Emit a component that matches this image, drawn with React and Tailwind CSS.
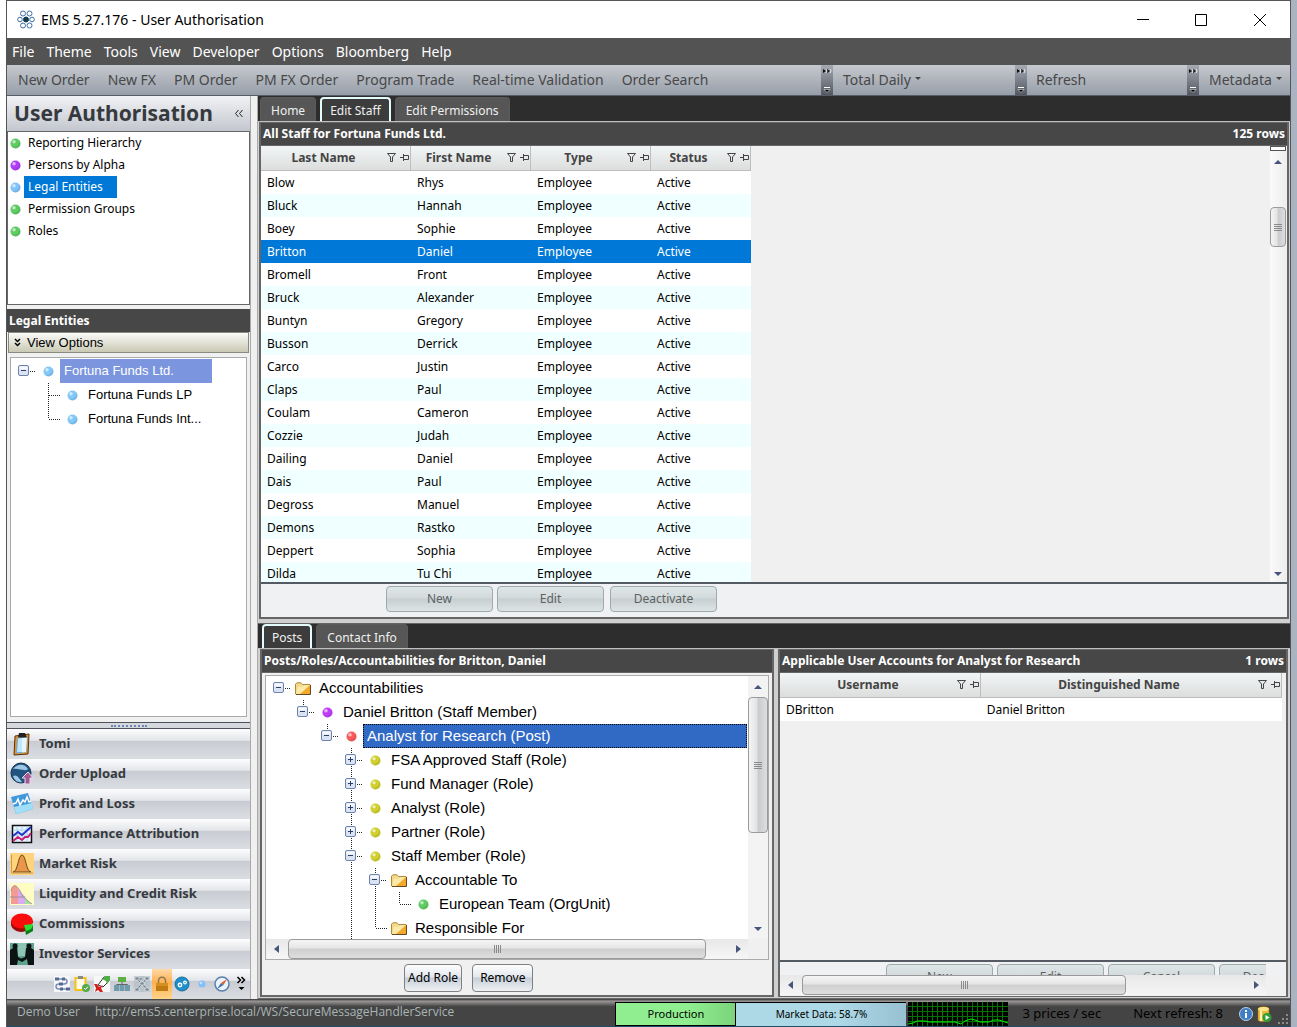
import { useState } from "react";

const uiFont = "font-['Noto_Sans','Open_Sans',sans-serif]";
const treeFont = "font-['Liberation_Sans',Arial,sans-serif]";

const menuItems = ["File", "Theme", "Tools", "View", "Developer", "Options", "Bloomberg", "Help"];
const orderItems = ["New Order", "New FX", "PM Order", "PM FX Order", "Program Trade", "Real-time Validation", "Order Search"];

const views = [
  { name: "Reporting Hierarchy", color: "#5ecb63" },
  { name: "Persons by Alpha", color: "#b03cf5" },
  { name: "Legal Entities", color: "#82c3fb" },
  { name: "Permission Groups", color: "#5ecb63" },
  { name: "Roles", color: "#5ecb63" },
];

const entityTree = [
  { label: "Fortuna Funds Ltd.", cells: ["minus"], icon: "#82c8fb", selected: true },
  { label: "Fortuna Funds LP", cells: ["", "tee"], icon: "#82c8fb" },
  { label: "Fortuna Funds Int...", cells: ["", "elbow"], icon: "#82c8fb" },
];

const postTree = [
  { label: "Accountabilities", cells: ["minus"], icon: "folder" },
  { label: "Daniel Britton (Staff Member)", cells: ["", "minus-top"], icon: "#c13cf8" },
  { label: "Analyst for Research (Post)", cells: ["", "", "minus-top"], icon: "#f95c5c", selected: true },
  { label: "FSA Approved Staff (Role)", cells: ["", "", "", "plus"], icon: "#cfcf2e" },
  { label: "Fund Manager (Role)", cells: ["", "", "", "plus"], icon: "#cfcf2e" },
  { label: "Analyst (Role)", cells: ["", "", "", "plus"], icon: "#cfcf2e" },
  { label: "Partner (Role)", cells: ["", "", "", "plus"], icon: "#cfcf2e" },
  { label: "Staff Member (Role)", cells: ["", "", "", "minus-through"], icon: "#cfcf2e" },
  { label: "Accountable To", cells: ["", "", "", "line", "minus-through"], icon: "folder" },
  { label: "European Team (OrgUnit)", cells: ["", "", "", "line", "line", "elbow"], icon: "#5ecb63" },
  { label: "Responsible For", cells: ["", "", "", "line", "elbow"], icon: "folder" },
];

const staff = [
  ["Blow", "Rhys"],
  ["Bluck", "Hannah"],
  ["Boey", "Sophie"],
  ["Britton", "Daniel"],
  ["Bromell", "Front"],
  ["Bruck", "Alexander"],
  ["Buntyn", "Gregory"],
  ["Busson", "Derrick"],
  ["Carco", "Justin"],
  ["Claps", "Paul"],
  ["Coulam", "Cameron"],
  ["Cozzie", "Judah"],
  ["Dailing", "Daniel"],
  ["Dais", "Paul"],
  ["Degross", "Manuel"],
  ["Demons", "Rastko"],
  ["Deppert", "Sophia"],
  ["Dilda", "Tu Chi"],
];

const Ball = ({ color, size = 11 }) => (
  <svg width={size} height={size} viewBox="0 0 11 11" className="shrink-0">
    <circle cx="5.5" cy="5.5" r="5" fill={color} />
    <path d="M1.5 8.5a5 5 0 0 0 8.6-1A5 5 0 0 0 9 2a5.6 5.6 0 0 1-7.500 6.500z" fill="#000" opacity=".08" />
    <circle cx="4" cy="3.800" r="1.800" fill="#fff" opacity=".6" />
  </svg>
);

const FolderIcon = () => (
  <svg width="16" height="13" viewBox="0 0 16 13">
    <path d="M.5 12V2L2 .8h4L7.500 2.500H15V12z" fill="#f3d988" stroke="#b08a3c" />
    <path d="M1 12l2-7.500h5L9.500 3H15v9z" fill="#fbe9a8" />
    <path d="M5 12l10-9v9z" fill="#f3a92c" />
    <path d="M1 12.500h14.500V3" fill="none" stroke="#5e4b22" />
  </svg>
);

const TreeCell = ({ kind }) => {
  const dots = { stroke: "#222", strokeDasharray: "1 1" };
  const box = kind.startsWith("minus") || kind === "plus";
  return (
    <svg width="24" height="24" viewBox="0 0 24 24" className="shrink-0">
      {(kind === "line" || kind === "tee" || kind === "plus" || kind === "minus-through") && <path d="M12.500 0V24" {...dots} />}
      {(kind === "elbow" || kind === "minus-top") && <path d="M12.500 0V12" {...dots} />}
      {(kind === "elbow" || kind === "tee") && <path d="M13 12.500H24" {...dots} />}
      {box && (
        <>
          <path d="M18 12.500H24" {...dots} />
          <rect x="6.500" y="6.500" width="10" height="10" rx="1.500" fill="#dbe3f2" stroke="#6c84ab" />
          <path d="M7.500 7.500h8v3h-8z" fill="#fff" opacity=".75" />
          <path d="M9 11.500h5" stroke="#2d3f63" />
          {kind === "plus" && <path d="M11.500 9v5" stroke="#2d3f63" />}
        </>
      )}
    </svg>
  );
};

const Tree = ({ rows, size, selectedClass }) => (
  <ul className={treeFont}>
    {rows.map((row) => (
      <li key={row.label} className="flex h-6">
        {row.cells.map((kind, i) => (
          <TreeCell key={i} kind={kind} />
        ))}
        <span className="flex w-6 shrink-0 items-center justify-center">
          {row.icon === "folder" ? <FolderIcon /> : <Ball color={row.icon} />}
        </span>
        <button type="button" className={`truncate px-1 text-left ${size} ${row.selected ? selectedClass : ""}`}>
          {row.label}
        </button>
      </li>
    ))}
  </ul>
);

const Arrow = ({ dir }) => {
  const shapes = {
    up: "M0 7h8L4 3z",
    down: "M0 2h8L4 6z",
    left: "M6 0v8L1 4z",
    right: "M2 0v8l5-4z",
  };
  return (
    <svg width="8" height="8" viewBox="0 0 8 8" className="shrink-0">
      <path d={shapes[dir]} fill="#46557a" />
    </svg>
  );
};

const HScroll = ({ thumb }) => (
  <div className="flex h-5 items-center bg-gradient-to-b from-[#e8e8e8] to-[#f6f6f6]">
    <span className="flex w-[22px] justify-center"><Arrow dir="left" /></span>
    <div className="flex h-full min-w-0 flex-1">
      <div className={`flex items-center justify-center gap-px rounded-sm border border-[#9a9a9a] bg-linear-[to_bottom,#f5f5f5,#e6e6e6_45%,#cfcfcf_50%,#dedede] ${thumb}`}>
        {[0, 1, 2, 3].map((n) => <i key={n} className="h-2 w-px bg-[#8a8a8a]" />)}
      </div>
    </div>
    <span className="flex w-5 justify-center"><Arrow dir="right" /></span>
  </div>
);

const VThumb = ({ size }) => (
  <div className={`flex flex-col items-center justify-center gap-px rounded-sm border border-[#9a9a9a] bg-linear-[to_right,#f5f5f5,#e2e2e4_45%,#c8cacd_50%,#dcdee0] ${size}`}>
    {[0, 1, 2, 3].map((n) => <i key={n} className="h-px w-2 bg-[#8a8a8a]" />)}
  </div>
);

const Tab = ({ label, active, onClick }) => (
  <button
    type="button"
    onClick={onClick}
    className={`h-full rounded-t-sm pt-0.5 text-[12px] text-[#f0f0f0] ${active ? "border-2 border-b-0 border-[#e4fbfb] bg-[#3c3c3c] px-2" : "border border-b-0 border-[#5a5a5a] bg-[#565656] px-2.5"}`}
  >
    {label}
  </button>
);

const PanelTitle = ({ title, rows }) => (
  <div className="flex h-6 shrink-0 items-center justify-between border-y border-[#666] bg-[#474747] px-0.5 text-[12px] font-bold text-white">
    <h2>{title}</h2>
    {rows && <span>{rows}</span>}
  </div>
);

const HeaderCell = ({ label }) => (
  <th className="h-[25px] border-r border-b border-[#bdbdbd] bg-linear-[to_bottom,#f2f5f6,#dcdedd] p-0 text-[12px] font-bold text-[#444]">
    <div className="flex items-center">
      <span className="flex-1">{label}</span>
      <svg width="24" height="12" viewBox="0 0 24 12" fill="none" stroke="#444" className="shrink-0">
        <path d="M1.500 1.500h8L6.500 5v4.500h-2V5z" />
        <path d="M14 5.500h3M17.500 2v7M17.500 3.500h5v4h-5" />
      </svg>
    </div>
  </th>
);

const GreyButton = ({ children }) => (
  <button type="button" className="h-[26px] w-[107px] shrink-0 rounded-sm border border-[#9eabab] bg-linear-[to_bottom,#dfe6e7,#d3dadb_45%,#c6cfd0_50%,#dde4e5] text-[12px] text-[#5c6262]">
    {children}
  </button>
);

const Grip = () => (
  <span className="flex h-full w-3 shrink-0 items-center bg-linear-[to_bottom,#a5aab3,#525963]">
    <svg width="12" height="31" viewBox="0 0 12 31">
      <path d="M2 4l3 2-3 2zM6 4l3 2-3 2z" fill="#111" />
      <path d="M5 4l1 2-1 2M9 4l1 2-1 2" stroke="#eee" fill="none" />
      <path d="M3 22.500h6" stroke="#fff" />
      <path d="M3 24.500h6l-3 3z" fill="#000" stroke="#fff" strokeWidth=".5" />
    </svg>
  </span>
);

const navItems = [
  {
    name: "Tomi",
    art: (
      <>
        <path d="M5 4l14-2-1 20-14 1z" fill="#e2932f" stroke="#5d3208" />
        <path d="M7.500 6l9.500-1-1 15-9.500 1z" fill="#bfe6fb" stroke="#6ba7cf" />
        <path d="M12 6l5-1-1 15-4 .5z" fill="#e6f6ff" />
        <path d="M9 1h6l2 4.500H8z" fill="#222" />
      </>
    ),
  },
  {
    name: "Order Upload",
    art: (
      <>
        <circle cx="11" cy="11" r="10" fill="#20537f" stroke="#153450" />
        <path d="M3 7c5-6 12-5 15 0-3 3-9-1-15 0zM3 14c4-2 6 2 9 6-4 1-8-2-9-6z" fill="#9ec7e6" />
        <path d="M18 10l5 6h-3v6h-5v-6h-3z" fill="#a05a94" stroke="#f3d7ec" />
      </>
    ),
  },
  {
    name: "Profit and Loss",
    art: (
      <>
        <path d="M1 5l17-4 5 16-17 5z" fill="#3f97dc" />
        <path d="M4 15l18-4 1 6-17 5z" fill="#9fe0f8" />
        <path d="M3 12l3-1 2-4 2 6 3-5 2 2 2-5 2 5 2-1" stroke="#fff" fill="none" strokeWidth="1.500" />
      </>
    ),
  },
  {
    name: "Performance Attribution",
    art: (
      <>
        <path d="M2.500 3.500h19v17h-19z" fill="#eef5ff" stroke="#111" strokeWidth="1.500" />
        <path d="M7 4v16M12 4v16M17 4v16M3 8h18M3 13h18" stroke="#a8d4f0" />
        <path d="M3 14l5-4 4 3 9-8" stroke="#2433c8" fill="none" strokeWidth="2" />
        <path d="M3 19l5-4 4 3 3-3h3l3-4" stroke="#c81e78" fill="none" strokeWidth="2" />
      </>
    ),
  },
  {
    name: "Market Risk",
    art: (
      <>
        <path d="M0 1h24v22H0z" fill="#ffd27c" />
        <path d="M3 20c5 0 5-17 9-17s4 17 9 17z" fill="#e8964a" stroke="#6d4a1c" />
        <path d="M1.500 3v18H23" stroke="#c79c50" fill="none" />
      </>
    ),
  },
  {
    name: "Liquidity and Credit Risk",
    art: (
      <>
        <path d="M0 1h24v22H0z" fill="#fffcc4" />
        <path d="M1 22V7c3-6 6-3 7 0v15z" fill="#f39a94" />
        <path d="M8 22V7l7 8v7z" fill="#dba8f2" />
        <path d="M15 22v-7l6 7z" fill="#9be89b" />
        <path d="M1 9c2-8 6-6 9 0s6 9 12 13M0 15h15" stroke="#a09098" fill="none" />
      </>
    ),
  },
  {
    name: "Commissions",
    art: (
      <>
        <path d="M1 9v4c2 7 11 8 14 6v-6l8-2V9z" fill="#a00808" />
        <ellipse cx="12" cy="9" rx="11" ry="7.500" fill="#fb0d0d" />
        <path d="M14 13l9 0v6l-7 4z" fill="#0b7d12" />
        <path d="M14 13l9-1c0 4-3 6-7 7z" fill="#2be034" />
      </>
    ),
  },
  {
    name: "Investor Services",
    art: (
      <>
        <path d="M0 1h24v22H0z" fill="#5fa28e" />
        <path d="M8 1h8v13H8z" fill="#8dc4b3" />
        <circle cx="5" cy="4" r="2.500" fill="#0b1413" />
        <circle cx="19" cy="4" r="2.500" fill="#0b1413" />
        <path d="M0 23V8l3-2h4l1 9 3 1.500L15 15l1-9h5l3 2v15h-6l-1-6-5 3-4-2-1 5z" fill="#0b1413" />
      </>
    ),
  },
];

const shortcuts = [
  {
    name: "Workflow",
    art: <><path d="M0 0h16v16H0z" fill="#f5f7fb" /><path d="M1 3h9c4 0 4 5 0 5H5c-4 0-4 5 0 5h9" stroke="#7b8db5" fill="none" strokeWidth="1.500" /><path d="M1 1.500h4v3H1zM8 1.500h3v3H8zM5 6.500h4v3H5zM6 11.500h3v3H6zM12 11.500h4v3h-4z" fill="#56698f" /></>,
  },
  {
    name: "Tasks",
    art: <><path d="M1.500 2h10v12h-10z" fill="#fffbe8" stroke="#f2c313" strokeWidth="2" /><path d="M4 0h5v3H4z" fill="#8a8a8a" /><circle cx="12" cy="12" r="4" fill="#55a94b" /><path d="M10 12l1.500 1.500L14 10.500" stroke="#fff" fill="none" /></>,
  },
  {
    name: "Allocations",
    art: <><path d="M0 0h16v16H0z" fill="#f7f7f7" /><path d="M4 9L10 1h4l1 4-6 6z" fill="#fff" stroke="#333" /><path d="M8 3l4-3h4v4l-3 4-1-3z" fill="#4dae43" /><path d="M0 8h3l2 3 4-2-2 3 2 4H6l-2-2-3 2 1-4z" fill="#d61f1f" /></>,
  },
  {
    name: "Organisation",
    art: <><path d="M4 1h8v5H4z" fill="#5db13f" /><path d="M8 6v3M2.500 11V8.500h11V11" stroke="#666" fill="none" /><path d="M0 9h5v6H0zM5.500 9h5v6h-5zM11 9h5v6h-5z" fill="#6f9cab" /></>,
  },
  {
    name: "Mapping",
    art: <><path d="M0 0h16v16H0z" fill="#b9c3cb" /><path d="M3 3l5 5-5 5M13 2L8 8l5 5M3 3h5" stroke="#69757f" fill="none" /><path d="M1 1h4v3H1zM11 1h4v3h-4zM6 6h4v3H6zM1 12h4v3H1zM11 12h4v3h-4z" fill="#7a8791" stroke="#fff" strokeWidth=".5" /></>,
  },
  {
    name: "User Authorisation",
    active: true,
    art: <><path d="M4.500 8V5c0-5 7-5 7 0v3" stroke="#8d7a55" fill="none" strokeWidth="1.500" /><path d="M2 7h12v8H2z" fill="#c07a10" /><path d="M2 7h12v3H2z" fill="#d28f22" /></>,
  },
  {
    name: "Settings",
    art: <><circle cx="8" cy="8" r="7" fill="#1f8fcb" stroke="#1b6d9c" /><circle cx="6" cy="9" r="2.400" fill="#fff" /><circle cx="6" cy="9" r=".9" fill="#1f8fcb" /><circle cx="11" cy="6.500" r="1.900" fill="#fff" /><circle cx="11" cy="6.500" r=".7" fill="#1f8fcb" /></>,
  },
  {
    name: "Entities",
    art: <><circle cx="8" cy="8" r="3.500" fill="#82bffb" /><circle cx="7" cy="7" r="1.300" fill="#c3e2ff" /></>,
  },
  {
    name: "Compass",
    art: <><circle cx="8" cy="8" r="7" fill="#eaf3fb" stroke="#5b80aa" strokeWidth="1.500" /><path d="M13 3L9.500 9 7 7z" fill="#e3602a" /><path d="M3 13l4-6 2.500 2z" fill="#3f6fae" /></>,
  },
];

const TitleBar = () => (
  <header className="flex h-[38px] shrink-0 items-center border-t border-[#555] bg-white pl-2.5">
    <svg width="18" height="19" viewBox="0 0 18 19" fill="none" stroke="#3f6ea5">
      <circle cx="6" cy="3.500" r="2.500" />
      <circle cx="12.500" cy="3.500" r="2.500" />
      <circle cx="3" cy="9.500" r="2.300" />
      <circle cx="15" cy="9.500" r="2.300" />
      <circle cx="6" cy="15.500" r="2.500" />
      <circle cx="12.500" cy="15.500" r="2.500" />
      <circle cx="9" cy="9.500" r="2.500" fill="#0f3d4d" stroke="#0f3d4d" />
    </svg>
    <h1 className="ml-1.5 flex-1 text-[14px] text-black">EMS 5.27.176 - User Authorisation</h1>
    <button type="button" aria-label="Minimise" className="flex w-[58px] justify-center">
      <svg width="12" height="12" stroke="#000"><path d="M0 5.500h12" /></svg>
    </button>
    <button type="button" aria-label="Maximise" className="flex w-[58px] justify-center">
      <svg width="12" height="12" stroke="#000" fill="none"><path d="M.5.5h11v11H.5z" /></svg>
    </button>
    <button type="button" aria-label="Close" className="flex w-[60px] justify-center">
      <svg width="12" height="12" stroke="#000"><path d="M0 0l12 12M12 0L0 12" /></svg>
    </button>
  </header>
);

const Toolbar = () => (
  <div className="flex h-[31px] shrink-0 items-center border-b border-[#555c66] bg-linear-[to_bottom,#c6c9ce,#969ea9] text-[14px] text-[#484848]">
    <div className="flex min-w-0 flex-1 gap-[18px] overflow-hidden pb-0.5 pl-[11px] whitespace-nowrap">
      {orderItems.map((item) => <button type="button" key={item}>{item}</button>)}
    </div>
    <Grip />
    <div className="w-[182px] pb-0.5 pl-2.5">
      <button type="button" className="flex items-center gap-1">Total Daily <svg width="6" height="4"><path d="M0 0h6L3 3z" fill="#444" /></svg></button>
    </div>
    <Grip />
    <div className="w-[160px] pb-0.5 pl-[9px]"><button type="button">Refresh</button></div>
    <Grip />
    <div className="w-[91px] pb-0.5 pl-2.5">
      <button type="button" className="flex items-center gap-1">Metadata <svg width="6" height="4"><path d="M0 0h6L3 3z" fill="#444" /></svg></button>
    </div>
  </div>
);

const Sidebar = ({ view, setView }) => (
  <aside className="flex w-[243px] shrink-0 flex-col bg-[#f0f0f0]">
    <div className="flex h-[35px] shrink-0 items-center justify-between bg-linear-[to_bottom,#f1f2f4,#c3c7ce] pr-1.5 pl-[7px]">
      <h2 className="text-[21px] font-bold text-[#363a3f]">User Authorisation</h2>
      <button type="button" aria-label="Collapse">
        <svg width="10" height="10" fill="none" stroke="#222"><path d="M4.500 1l-3 3.500 3 3.500M8.500 1l-3 3.500 3 3.500" /></svg>
      </button>
    </div>
    <ul className="h-[174px] shrink-0 border border-[#666] bg-white text-[12px]">
      {views.map((v) => (
        <li key={v.name} className="flex h-[22px] items-center pl-0.5">
          <Ball color={v.color} />
          <button
            type="button"
            onClick={() => setView(v.name)}
            className={`ml-[3px] h-full pr-3.5 pl-1 ${view === v.name ? "bg-[#0078d7] text-white" : "text-black"}`}
          >
            {v.name}
          </button>
        </li>
      ))}
    </ul>
    <h3 className="mt-1 h-[23px] shrink-0 bg-[#474747] px-0.5 text-[12px]/[23px] font-bold text-white">Legal Entities</h3>
    <button type="button" className={`mr-px ml-px flex h-[21px] shrink-0 items-center border border-[#8a8a80] bg-linear-[to_bottom,#fbfbf9,#c9c9b4] pl-[5px] text-[13px] text-black ${treeFont}`}>
      <svg width="7" height="9" fill="none" stroke="#000" strokeWidth="1.500" className="mr-1.5"><path d="M1 1l2.500 2.500L6 1M1 5l2.500 2.500L6 5" /></svg>
      View Options
    </button>
    <div className="mx-[3px] mt-1 min-h-0 flex-1 overflow-hidden border border-[#aaa] bg-white p-px">
      <Tree rows={entityTree} size="text-[13px]" selectedClass="w-38 bg-[#7b96de] text-white" />
    </div>
    <div className="mt-[5px] flex h-[7px] shrink-0 items-center justify-center border-y border-[#4d535d] bg-[#d5d8dd]">
      <span className="w-9 border-t-2 border-dotted border-[#6d87b5]" />
    </div>
    <nav className="shrink-0">
      {navItems.map((item) => (
        <a key={item.name} href="#" className="flex h-[30px] items-center gap-[5px] bg-linear-[to_bottom,#fdfdfe,#e3e5e9_38%,#c8ccd2_40%,#d9dce1_95%] pl-[3px] text-[13px] font-bold text-[#363a3f]">
          <svg width="24" height="24" viewBox="0 0 24 24">{item.art}</svg>
          {item.name}
        </a>
      ))}
    </nav>
    <div className="flex h-[30px] shrink-0 items-center justify-end bg-linear-[to_bottom,#fdfdfe,#e3e5e9_38%,#c8ccd2_40%,#d9dce1_95%] pr-1">
      {shortcuts.map((s) => (
        <button type="button" key={s.name} aria-label={s.name} className={`flex h-full w-5 items-center justify-center ${s.active ? "bg-linear-[to_bottom,#ffd9a8,#ffb04f_45%,#ffd58a]" : ""}`}>
          <svg width="16" height="16" viewBox="0 0 16 16">{s.art}</svg>
        </button>
      ))}
      <button type="button" aria-label="More" className="ml-1">
        <svg width="10" height="16" fill="none" stroke="#000" strokeWidth="1.500">
          <path d="M1.500 1l3 3-3 3M5.500 1l3 3-3 3" />
          <path d="M2.500 11h6l-3 3z" fill="#000" stroke="none" />
        </svg>
      </button>
    </div>
  </aside>
);

const StaffPanel = () => {
  const [selected, setSelected] = useState("Britton");
  return (
    <section className="mx-px flex min-h-0 flex-1 flex-col border-x-2 border-b-2 border-[#666] bg-[#f0f0f0]">
      <PanelTitle title="All Staff for Fortuna Funds Ltd." rows="125 rows" />
      <div className="flex min-h-0 flex-1 pr-px">
        <div className="min-w-0 flex-1 overflow-hidden">
          <table className="w-[490px] table-fixed border-separate border-spacing-0 text-left text-[12px]">
            <colgroup>
              <col className="w-[150px]" />
              <col className="w-[120px]" />
              <col className="w-[120px]" />
              <col className="w-[100px]" />
            </colgroup>
            <thead>
              <tr className="text-center">
                {["Last Name", "First Name", "Type", "Status"].map((h) => <HeaderCell key={h} label={h} />)}
              </tr>
            </thead>
            <tbody>
              {staff.map(([last, first], i) => (
                <tr
                  key={last}
                  onClick={() => setSelected(last)}
                  className={selected === last ? "bg-[#0078d7] text-white" : i % 2 ? "bg-[#f0ffff] text-black" : "bg-white text-black"}
                >
                  <td className="h-[23px] p-0 pl-1.5">{last}</td>
                  <td className="h-[23px] p-0 pl-1.5">{first}</td>
                  <td className="h-[23px] p-0 pl-1.5">Employee</td>
                  <td className="h-[23px] p-0 pl-1.5">Active</td>
                </tr>
              ))}
            </tbody>
          </table>
        </div>
        <div className="flex w-4 flex-col items-center bg-linear-[to_right,#fafafa,#eeeeee] pb-1">
          <div className="mb-1.5 h-[5px] w-full border border-[#555] bg-white" />
          <Arrow dir="up" />
          <div className="min-h-0 w-full flex-1 pt-[42px]"><VThumb size="h-10 w-full" /></div>
          <Arrow dir="down" />
        </div>
      </div>
      <div className="flex h-[35px] shrink-0 gap-1 border-t-2 border-[#555b63] bg-[#eff1f3] pt-0.5 pl-[125px]">
        <GreyButton>New</GreyButton>
        <GreyButton>Edit</GreyButton>
        <span className="flex items-start pl-0.5"><GreyButton>Deactivate</GreyButton></span>
      </div>
    </section>
  );
};

const PostsPanel = () => (
  <section className="flex min-h-0 flex-col border-x-2 border-b-2 border-[#666] bg-[#f0f0f0]">
    <PanelTitle title="Posts/Roles/Accountabilities for Britton, Daniel" />
    <div className="mx-[3px] mt-0.5 flex min-h-0 flex-1 flex-col border border-[#aaa] bg-white">
      <div className="flex min-h-0 flex-1">
        <div className="min-w-0 flex-1 overflow-hidden px-px">
          <Tree rows={postTree} size="text-[15px]" selectedClass="flex-1 outline outline-dotted -outline-offset-1 outline-black bg-[#316ac5] text-white" />
        </div>
        <div className="flex w-5 flex-col items-center bg-[#f3f3f3] pt-1.5 pb-1.5">
          <Arrow dir="up" />
          <div className="min-h-0 w-full flex-1 pt-[7px]"><VThumb size="h-[136px] w-full" /></div>
          <Arrow dir="down" />
        </div>
      </div>
      <div className="flex">
        <div className="min-w-0 flex-1"><HScroll thumb="w-[95%]" /></div>
        <div className="w-5 bg-[#f0f0f0]" />
      </div>
    </div>
    <div className="flex h-[35px] shrink-0 gap-2.5 pt-1 pl-[142px] text-[12px] text-black">
      <button type="button" className="h-7 rounded-sm border border-[#808080] bg-linear-[to_bottom,#fdfdfe,#e3e8ee_45%,#c6ced8_50%,#eef1f4] px-[3px]">Add Role</button>
      <button type="button" className="h-7 rounded-sm border border-[#808080] bg-linear-[to_bottom,#fdfdfe,#e3e8ee_45%,#c6ced8_50%,#eef1f4] px-[7px]">Remove</button>
    </div>
  </section>
);

const AccountsPanel = () => (
  <section className="flex min-h-0 min-w-0 flex-col border-x-2 border-b border-[#666] bg-[#f0f0f0]">
    <PanelTitle title="Applicable User Accounts for Analyst for Research" rows="1 rows" />
    <div className="min-h-0 flex-1 overflow-hidden pr-1">
      <table className="w-full table-fixed border-separate border-spacing-0 text-left text-[12px]">
        <colgroup>
          <col className="w-2/5" />
          <col className="w-3/5" />
        </colgroup>
        <thead>
          <tr className="text-center">
            <HeaderCell label="Username" />
            <HeaderCell label="Distinguished Name" />
          </tr>
        </thead>
        <tbody>
          <tr className="bg-white text-black">
            <td className="h-[23px] p-0 pl-1.5">DBritton</td>
            <td className="h-[23px] p-0 pl-1.5">Daniel Britton</td>
          </tr>
        </tbody>
      </table>
    </div>
    <div className="h-[15px] shrink-0 overflow-hidden border-t-2 border-[#555b63] bg-[#eff1f3] pt-0.5 pr-5 pl-[106px]">
      <div className="flex gap-1 overflow-hidden">
        <GreyButton>New</GreyButton>
        <GreyButton>Edit</GreyButton>
        <GreyButton>Cancel</GreyButton>
        <GreyButton>Deactivate</GreyButton>
      </div>
    </div>
    <div className="pr-5 pb-px"><HScroll thumb="w-[73%]" /></div>
  </section>
);

const StatusBar = () => (
  <footer className="flex h-7 shrink-0 items-end border-b border-[#1f4e6a] bg-linear-[to_bottom,#333,#9a9696_8%,#6f6d6d_18%,#444_28%] text-[11px]">
    <div className="flex h-6 min-w-0 flex-1 gap-[15px] pl-2.5 font-['Open_Sans','Noto_Sans',sans-serif] text-[12px]/[20px] text-[#a9b5b5]">
      <span>Demo User</span>
      <span className="truncate">http://ems5.centerprise.local/WS/SecureMessageHandlerService</span>
    </div>
    <div className="flex h-6 w-[121px] items-center justify-center border border-black bg-linear-[to_right,#90ee90,#90ee90_60%,#7bd47b] text-black">Production</div>
    <div className="flex h-6 w-[170px] items-center justify-center border-t border-black bg-linear-[to_right,#add8e6,#add8e6_60%,#98c0d2] text-[10px] text-black">Market Data: 58.7%</div>
    <svg height="24" viewBox="0 0 100 24" className="ml-0.5 w-[100px]">
      <path d="M0 0h100v24H0z" fill="#000" />
      <path d="M0 4.500h100M0 9.500h100M0 14.500h100M0 19.500h100M4.500 0v24M9.500 0v24M14.500 0v24M19.500 0v24M24.500 0v24M29.500 0v24M34.500 0v24M39.500 0v24M44.500 0v24M49.500 0v24M54.500 0v24M59.500 0v24M64.500 0v24M69.500 0v24M74.500 0v24M79.500 0v24M84.500 0v24M89.500 0v24M94.500 0v24" stroke="#007400" />
      <path d="M0 22l5-1 4-2h8l4 1h26l6 2 4-3 6-2 4 1 5 2h9l5-2h5l6 2 3 1" stroke="#00f000" fill="none" />
    </svg>
    <div className="flex h-6 gap-8 pl-3.5 text-[13px]/[22px] text-black">
      <span>3 prices / sec</span>
      <span>Next refresh: 8</span>
    </div>
    <div className="ml-4 flex h-6 items-center gap-1">
      <svg width="14" height="14" viewBox="0 0 14 14">
        <circle cx="7" cy="7" r="6.500" fill="#3f7ec5" stroke="#b9d3ef" />
        <path d="M7 3v2M7 6v5" stroke="#fff" strokeWidth="2" />
      </svg>
      <svg width="15" height="17" viewBox="0 0 15 17">
        <path d="M1 3c0-3 11-3 11 0v11c0 2-11 2-11 0z" fill="#e8b93a" stroke="#a97a12" strokeWidth=".5" />
        <path d="M3 4v11h2V4z" fill="#fff2b8" />
        <ellipse cx="6.500" cy="3" rx="5.500" ry="2" fill="#fbe48c" />
        <circle cx="10" cy="11.500" r="4.500" fill="#2f9e36" />
        <path d="M8.500 9v5l4-2.500z" fill="#fff" />
      </svg>
      <svg width="14" height="14" fill="#8b8b8b" className="self-end">
        <path d="M10 2h2v2h-2zM6 6h2v2H6zM10 6h2v2h-2zM2 10h2v2H2zM6 10h2v2H6zM10 10h2v2h-2z" />
      </svg>
    </div>
  </footer>
);

const App = () => {
  const [view, setView] = useState("Legal Entities");
  const [tab, setTab] = useState("Edit Staff");
  const [lowerTab, setLowerTab] = useState("Posts");

  return (
    <div className="flex h-screen bg-linear-[to_right,#fff_50%,#a9b3c2_50%] pr-1.5 pl-1.5">
      <div className={`flex min-w-0 flex-1 flex-col border-x border-[#555] bg-[#d0d0d0] ${uiFont}`}>
        <TitleBar />
        <nav className="flex h-[27px] shrink-0 items-center gap-3 bg-[#535353] pl-[5px] text-[14px] text-white">
          {menuItems.map((item) => <button type="button" key={item}>{item}</button>)}
        </nav>
        <Toolbar />
        <div className="flex min-h-0 flex-1">
          <Sidebar view={view} setView={setView} />
          <div className="w-2 shrink-0 border-x border-[#aaa] bg-[#f0f0f0]" />
          <main className="flex min-w-0 flex-1 flex-col">
            <div className="flex min-h-0 flex-[7] flex-col">
              <div className="flex h-[26px] shrink-0 gap-1 border-b border-[#c0c0c0] bg-[#2d2d2d] pt-px pl-0.5">
                {["Home", "Edit Staff", "Edit Permissions"].map((t) => (
                  <Tab key={t} label={t} active={tab === t} onClick={() => setTab(t)} />
                ))}
              </div>
              <StaffPanel />
            </div>
            <div className="mt-1 flex min-h-0 flex-[5] flex-col border-b border-[#666] pb-px">
              <div className="flex h-[26px] shrink-0 gap-1 border-t border-b border-t-[#666] border-b-[#c0c0c0] bg-[#2d2d2d] pl-1">
                {["Posts", "Contact Info"].map((t) => (
                  <Tab key={t} label={t} active={lowerTab === t} onClick={() => setLowerTab(t)} />
                ))}
              </div>
              <div className="grid min-h-0 flex-1 grid-cols-[514px_minmax(0,1fr)] grid-rows-1 gap-1 px-0.5">
                <PostsPanel />
                <AccountsPanel />
              </div>
            </div>
          </main>
        </div>
        <StatusBar />
      </div>
    </div>
  );
};

export default App;
